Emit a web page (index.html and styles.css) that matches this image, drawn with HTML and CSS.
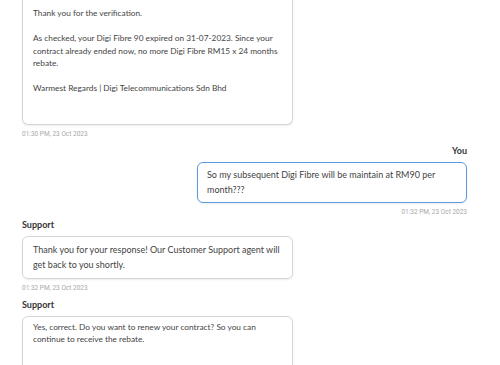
FILE: index.html
```html
<!DOCTYPE html>
<html lang="en">
<head>
    <meta charset="UTF-8">
    <meta name="viewport" content="width=device-width, initial-scale=1.0">
    <title>Support chat</title>
    <link rel="stylesheet" href="styles.css">
</head>
<body>

    <div class="chat">
        <div class="message agent first">
            <div class="bubble">Thank you for the verification.

As checked, your Digi Fibre 90 expired on 31-07-2023. Since your contract already ended now, no more Digi Fibre RM15 x 24 months rebate.

Warmest Regards | Digi Telecommunications Sdn Bhd


</div>
            <div class="time">01:30 PM, 23 Oct 2023</div>
        </div>

        <div class="message user">
            <div class="name">You</div>
            <div class="bubble">So my subsequent Digi Fibre will be maintain at RM90 per month???</div>
            <div class="time">01:32 PM, 23 Oct 2023</div>
        </div>

        <div class="message auto">
            <div class="name">Support</div>
            <div class="bubble">Thank you for your response! Our Customer Support agent will get back to you shortly.</div>
            <div class="time">01:32 PM, 23 Oct 2023</div>
        </div>

        <div class="message agent">
            <div class="name">Support</div>
            <div class="bubble">Yes, correct. Do you want to renew your contract? So you can continue to receive the rebate.


</div>
        </div>
    </div>

</body>
</html>
```

FILE: styles.css
```css
body {
    font-family: Lato, "Liberation Sans", sans-serif;
    margin: 0;
    background: #fff;
    color: #333;
}
.chat {
    display: flex;
    flex-direction: column;
    padding: 0 33px 0 22px;
}
.message {
    display: flex;
    flex-direction: column;
    align-items: flex-start;
    margin-bottom: 6px;
}
.message.user {
    align-items: flex-end;
    margin-bottom: 2px;
}
.name {
    font-size: 9px;
    font-weight: 700;
    line-height: 12px;
    color: #333;
    margin-bottom: 5px;
}
.bubble {
    width: 271px;
    box-sizing: border-box;
    padding: 4px 10px;
    border: 1px solid #d6d6d6;
    border-radius: 6px;
    box-shadow: 0 1px 2px rgba(0, 0, 0, 0.08);
    font-size: 8.3px;
    line-height: 12.5px;
    color: #444;
    white-space: pre-line;
}
.first .bubble {
    border-top: none;
    border-top-left-radius: 0;
    border-top-right-radius: 0;
    padding-top: 7px;
}
.auto .bubble,
.user .bubble {
    font-size: 9px;
    line-height: 15px;
    padding: 5.5px 10px;
}
.user .bubble {
    width: 270px;
    border: 1.5px solid #5b9be0;
    padding: 4.5px 9px;
}
.time {
    font-size: 6.5px;
    line-height: 10px;
    color: #a8a8a8;
    margin-top: 4px;
    font-family: Roboto, sans-serif;
}
```
